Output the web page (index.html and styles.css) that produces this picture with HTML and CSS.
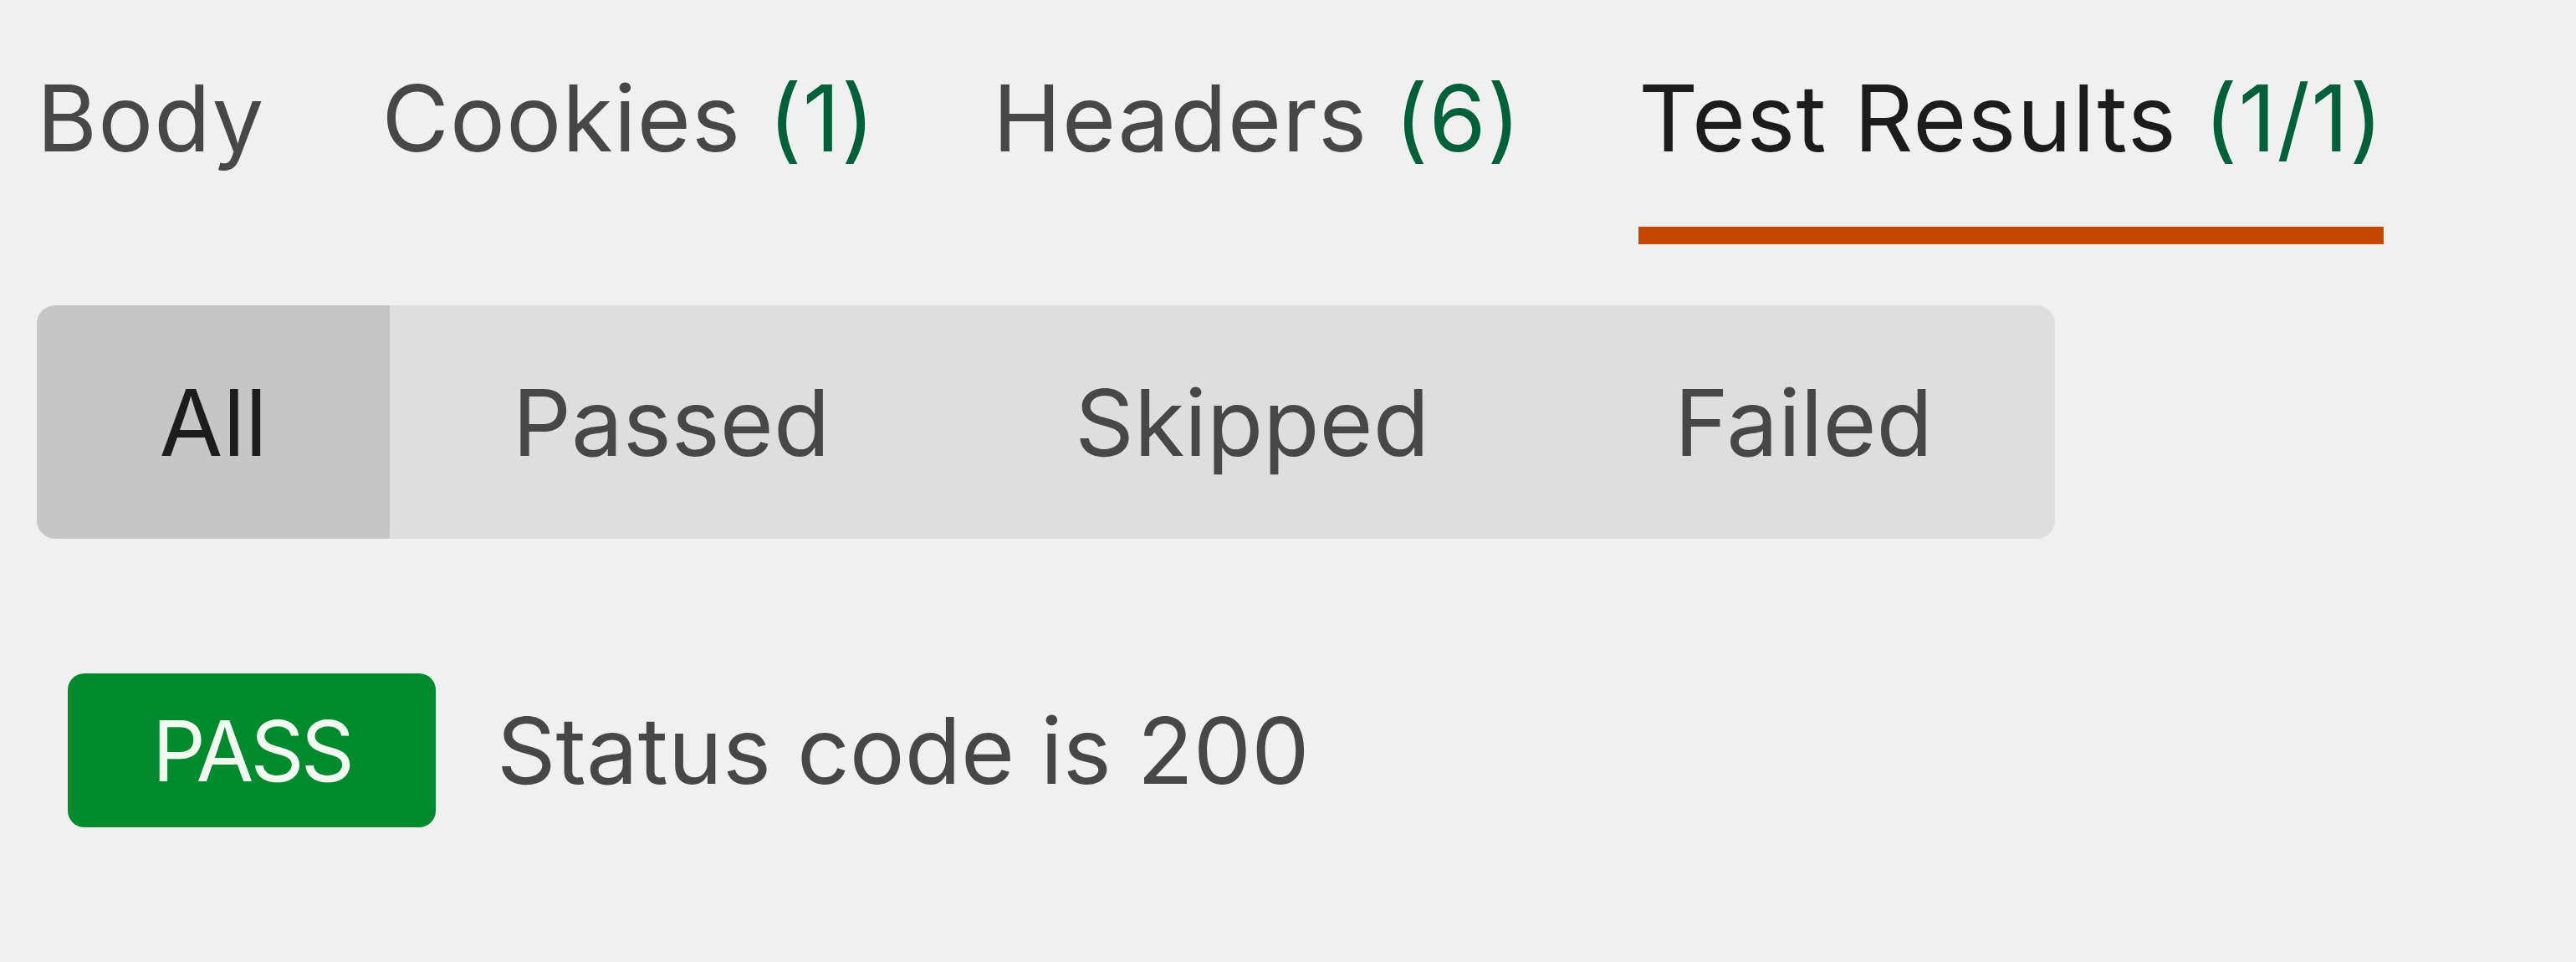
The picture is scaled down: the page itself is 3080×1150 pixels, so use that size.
FILE: index.html
```html
<!DOCTYPE html>
<html lang="en">
<head>
<meta charset="utf-8">
<title>Test Results</title>
<link rel="stylesheet" href="styles.css">
</head>
<body>
<div class="panel">
  <nav class="tabs">
    <div class="tab">Body</div>
    <div class="tab">Cookies <span class="count">(1)</span></div>
    <div class="tab">Headers <span class="count">(6)</span></div>
    <div class="tab active">Test Results <span class="count">(1/1)</span></div>
  </nav>
  <div class="segmented">
    <div class="seg active">All</div>
    <div class="seg">Passed</div>
    <div class="seg">Skipped</div>
    <div class="seg">Failed</div>
  </div>
  <div class="results">
    <div class="result">
      <span class="badge">PASS</span>
      <span class="name">Status code is 200</span>
    </div>
  </div>
</div>
</body>
</html>
```
FILE: styles.css
```css
html, body {
  margin: 0;
  padding: 0;
  background: #f0f0f0;
}
body {
  font-family: Inter, "Noto Sans", "Liberation Sans", sans-serif;
  color: #444444;
}
.panel {
  padding: 75px 0 0 44px;
  display: flex;
  flex-direction: column;
  align-items: flex-start;
}
.tabs {
  display: flex;
  gap: 140px;
  font-size: 110px;
  line-height: 133px;
  letter-spacing: 1.2px;
}
.tab {
  padding-bottom: 63px;
  border-bottom: 21px solid transparent;
  color: #474747;
  white-space: nowrap;
}
.tab.active {
  color: #1c1c1c;
  border-bottom-color: #c54700;
}
.count {
  color: #00603a;
}
.segmented {
  margin-top: 73px;
  display: flex;
  height: 279px;
  background: #dedede;
  border-radius: 22px;
  overflow: hidden;
  font-size: 110px;
}
.seg {
  display: flex;
  align-items: center;
  padding: 0 146.5px;
  color: #474747;
}
.seg.active {
  background: #c6c6c6;
  color: #1c1c1c;
}
.results {
  margin-top: 161px;
  padding-left: 37px;
}
.result {
  display: flex;
  align-items: center;
  gap: 73px;
}
.badge {
  display: flex;
  align-items: center;
  justify-content: center;
  width: 440px;
  height: 184px;
  background: #008a2e;
  color: #f2faf2;
  border-radius: 20px;
  font-size: 100px;
  letter-spacing: -4px;
}
.name {
  font-size: 110px;
  color: #474747;
}
```
